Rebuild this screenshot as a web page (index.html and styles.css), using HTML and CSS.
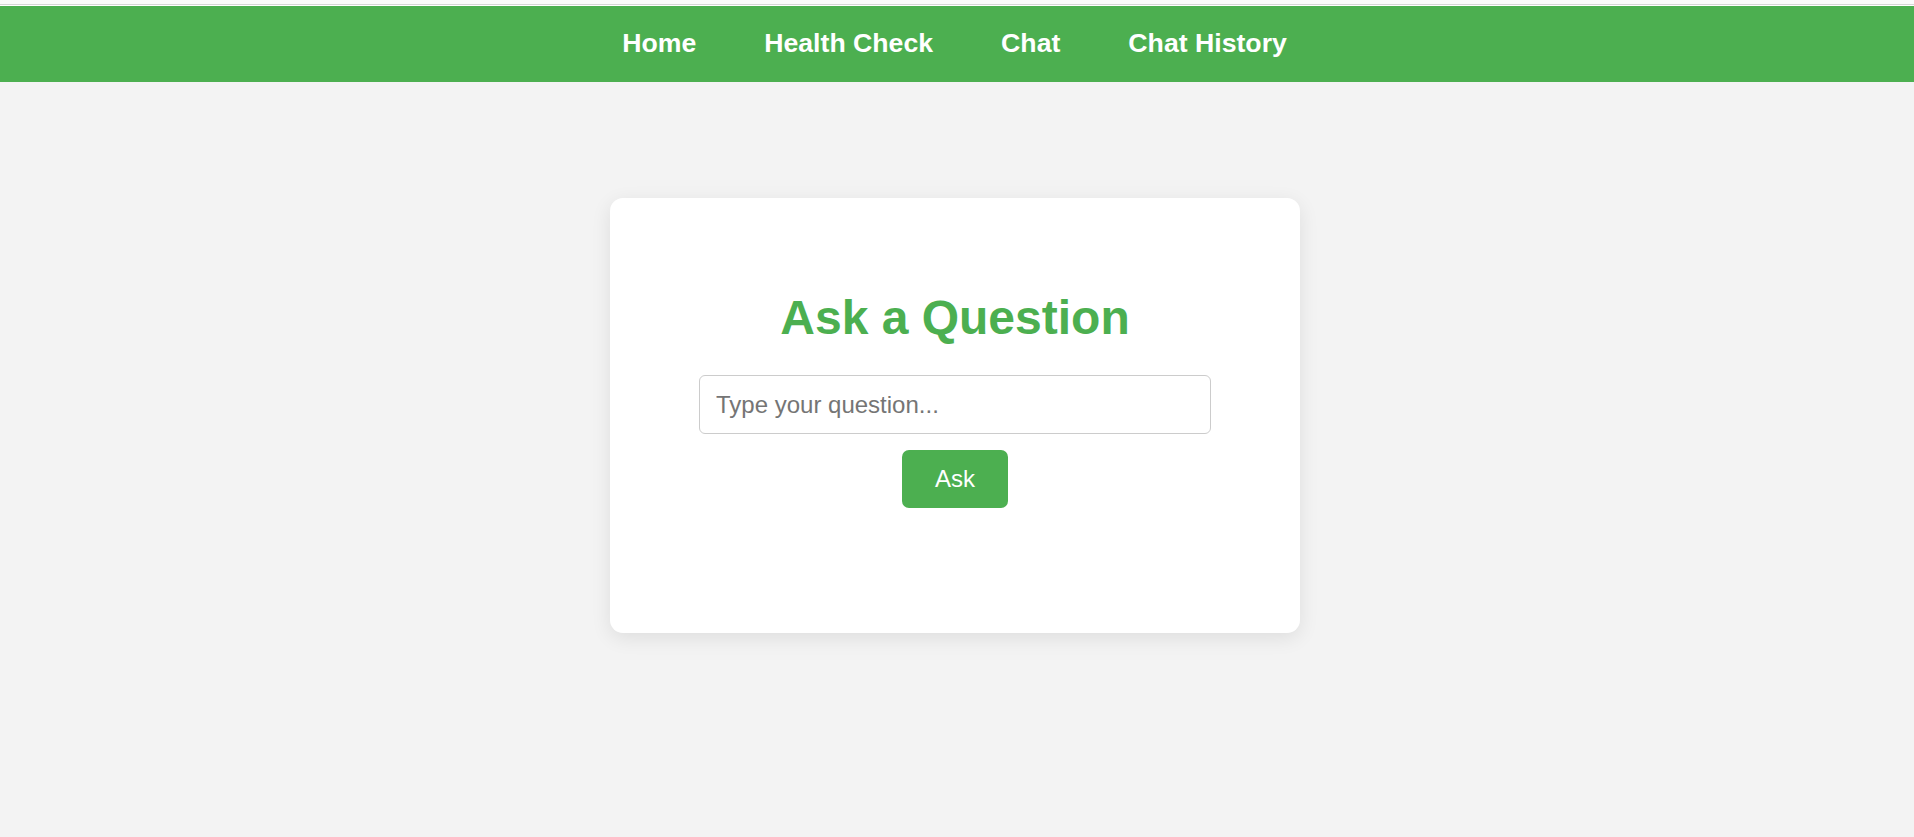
FILE: index.html
```html
<!DOCTYPE html>
<html lang="en">
<head>
<meta charset="utf-8">
<title>Ask a Question</title>
<link rel="stylesheet" href="styles.css">
</head>
<body>
  <div class="chrome"><div class="topline"></div></div>
  <nav class="navbar">
    <ul class="nav-list">
      <li><a class="nav-link" href="#">Home</a></li>
      <li><a class="nav-link" href="#">Health Check</a></li>
      <li><a class="nav-link" href="#">Chat</a></li>
      <li><a class="nav-link" href="#">Chat History</a></li>
    </ul>
  </nav>
  <main class="main">
    <section class="card">
      <h2 class="title">Ask a Question</h2>
      <form class="ask-form" onsubmit="return false;">
        <input class="question-input" type="text" placeholder="Type your question...">
        <button class="ask-button" type="submit">Ask</button>
      </form>
    </section>
  </main>
</body>
</html>
```

FILE: styles.css
```css
* {
  box-sizing: border-box;
}

html, body {
  margin: 0;
  padding: 0;
}

body {
  background: #f3f3f3;
  font-family: "Liberation Sans", Arial, sans-serif;
  min-height: 837px;
}

.chrome {
  background: #ffffff;
  padding-bottom: 1px;
}

.topline {
  height: 5px;
  background: #fbfbfb;
  border-bottom: 1px solid #d6d6d6;
}

.navbar {
  background: #4caf50;
  height: 76px;
  display: flex;
  align-items: center;
  justify-content: center;
  padding-right: 5px;
  padding-bottom: 2px;
}

.nav-list {
  list-style: none;
  margin: 0;
  padding: 0;
  display: flex;
  gap: 68px;
}

.nav-link {
  color: #ffffff;
  text-decoration: none;
  font-weight: bold;
  font-size: 26.67px;
}

.main {
  display: flex;
  justify-content: center;
  padding-top: 116px;
  padding-right: 4px;
}

.card {
  width: 690px;
  background: #ffffff;
  border-radius: 13px;
  box-shadow: 0 5px 20px rgba(0, 0, 0, 0.09);
  padding: 92px 0 125px;
  display: flex;
  flex-direction: column;
  align-items: center;
}

.title {
  margin: 0;
  color: #4caf50;
  font-size: 48px;
  line-height: 55px;
  font-weight: bold;
}

.ask-form {
  margin-top: 30px;
  display: flex;
  flex-direction: column;
  align-items: center;
  gap: 16px;
}

.question-input {
  width: 512px;
  height: 59px;
  padding: 15px 16px;
  border: 1px solid #cccccc;
  border-radius: 6px;
  font-family: "Liberation Sans", Arial, sans-serif;
  font-size: 24px;
  line-height: 27px;
  color: #333333;
  background: #ffffff;
  outline: none;
}

.question-input::placeholder {
  color: #757575;
}

.ask-button {
  height: 58px;
  padding: 15px 33px;
  border: none;
  border-radius: 7px;
  background: #4caf50;
  color: #ffffff;
  font-family: "Liberation Sans", Arial, sans-serif;
  font-size: 24px;
  line-height: 28px;
  cursor: pointer;
}
```
